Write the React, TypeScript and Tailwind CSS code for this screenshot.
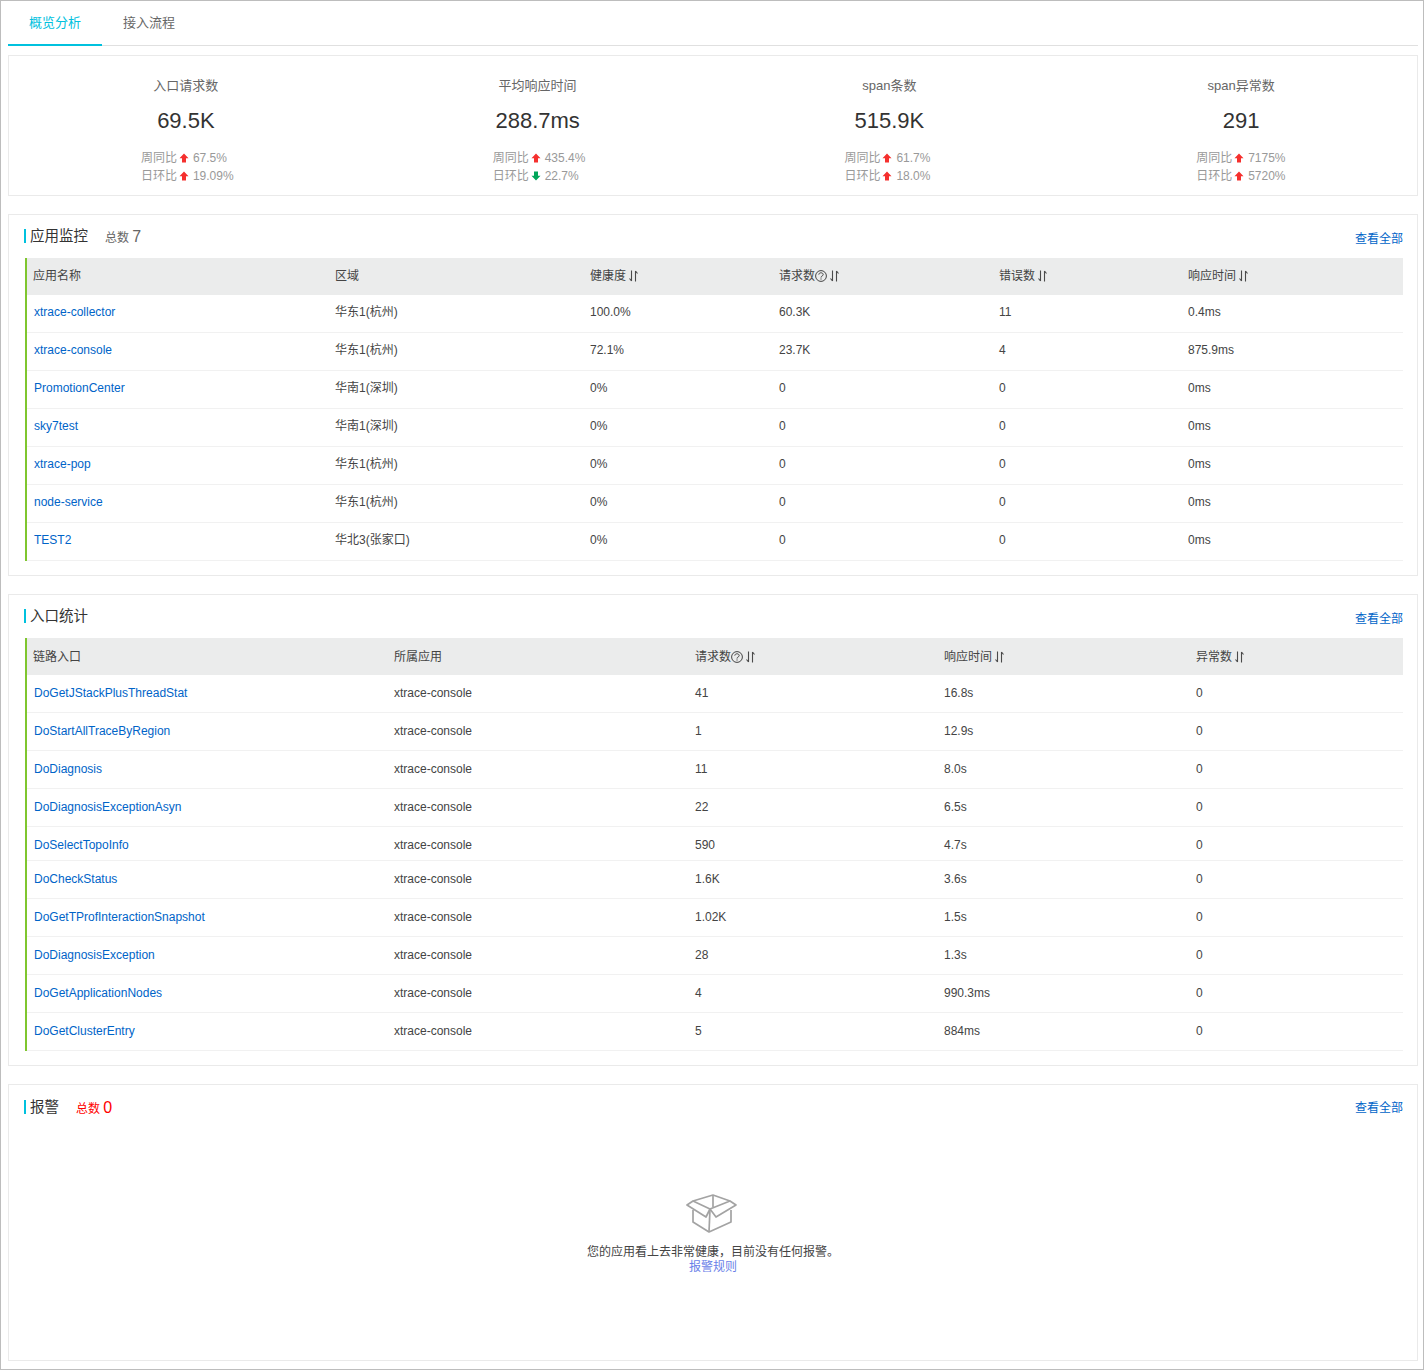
const up = (c: string) => (
  <svg width="10" height="10" viewBox="0 0 10 10" className="inline-block align-[-1px] ml-[2px] mr-[4px]">
    <path d="M5 0.5L9.5 5.2H7V9.5H3V5.2H0.5Z" fill={c} />
  </svg>
);
const down = (c: string) => (
  <svg width="10" height="10" viewBox="0 0 10 10" className="inline-block align-[-1px] ml-[2px] mr-[4px]">
    <path d="M5 9.5L9.5 4.8H7V0.5H3V4.8H0.5Z" fill={c} />
  </svg>
);

function Sort() {
  return (
    <svg width="9" height="12" viewBox="0 0 9 12" className="inline-block align-[-2px] ml-[3px]" fill="none" stroke="#4a4a4a" strokeWidth="1.1">
      <path d="M2.5 0.5V11M0.5 8.5L2.5 11" />
      <path d="M6.5 11.5V1M8.5 3.5L6.5 1" />
    </svg>
  );
}

function Help() {
  return (
    <svg width="12" height="12" viewBox="0 0 12 12" className="inline-block align-[-2px]" fill="none" stroke="#444" strokeWidth="1">
      <circle cx="6" cy="6" r="5.4" />
      <path d="M3.8 4.6C3.8 2.2 8.2 2.2 8.2 4.6C8.2 6 6 5.8 6 7.6" />
      <path d="M6 8.4V9.6" />
    </svg>
  );
}

function Stat({ title, value, wk, wkUp, day, dayUp }: { title: string; value: string; wk: string; wkUp: boolean; day: string; dayUp: boolean }) {
  return (
    <div className="w-[352px] flex flex-col items-center">
      <div className="text-[13px] leading-[18px] text-[#666] mt-[21px]">{title}</div>
      <div className="text-[22px] leading-[30px] text-[#333] mt-[11px]">{value}</div>
      <div className="mt-[13px] w-[90px] text-[12px] leading-[18px] text-[#999] whitespace-nowrap">
        <div>周同比{wkUp ? up("#f5302e") : down("#00a65a")}{wk}</div>
        <div>日环比{dayUp ? up("#f5302e") : down("#00a65a")}{day}</div>
      </div>
    </div>
  );
}

function Title({ name, extra, danger }: { name: string; extra?: string; danger?: boolean }) {
  return (
    <div className="h-[43px] flex items-start justify-between pr-[14px] pl-[15px]">
      <div className={`flex items-center h-[14px] ${danger ? "mt-[15px]" : "mt-[14px]"}`}>
        <div className="w-[2px] h-[14px] bg-[#00c1de]" />
        <span className="ml-[4px] mt-[2px] text-[14.5px] text-[#333]">{name}</span>
        {extra !== undefined && (
          <span className={`ml-[17px] text-[12px] mt-[2px] ${danger ? "text-[#ff0000]" : "text-[#666]"}`}>
            总数 <span className="text-[16px]">{extra}</span>
          </span>
        )}
      </div>
      <a className={`text-[12px] text-[#0064c8] leading-[16px] ${danger ? "mt-[15px]" : "mt-[16px]"}`}>查看全部</a>
    </div>
  );
}

type Col = { t: string; help?: boolean; sort?: boolean };

function Table({ cols, rows, gridClass, shortRow, headPad, cellPad }: { cols: Col[]; rows: string[][]; gridClass: string; shortRow?: number; headPad: string; cellPad: string }) {
  return (
    <div className="ml-[16px] mr-[14px] border-l-2 border-[#7fc62f]">
      <div className={`grid ${gridClass} h-[37px] items-center bg-[#ebecec] text-[12px] text-[#444] ${headPad}`}>
        {cols.map((c, j) => (
          <div key={c.t} className={`whitespace-nowrap ${j === 0 ? "pl-[6px]" : "pl-[5px]"}`}>
            {c.t}
            {c.help && <Help />}
            {c.sort && <Sort />}
          </div>
        ))}
      </div>
      {rows.map((r, i) => (
        <div
          key={r[0]}
          className={`grid ${gridClass} ${i === shortRow ? "h-[34px]" : "h-[38px]"} items-start border-b border-[#f1f1f1] text-[12px] leading-[14px] text-[#444] ${cellPad}`}
        >
          {r.map((v, j) => (
            <div key={j} className={`whitespace-nowrap ${j === 0 ? "pl-[7px] text-[#0064c8]" : "pl-[5px]"}`}>
              {v}
            </div>
          ))}
        </div>
      ))}
    </div>
  );
}

const apps = [
  ["xtrace-collector", "华东1(杭州)", "100.0%", "60.3K", "11", "0.4ms"],
  ["xtrace-console", "华东1(杭州)", "72.1%", "23.7K", "4", "875.9ms"],
  ["PromotionCenter", "华南1(深圳)", "0%", "0", "0", "0ms"],
  ["sky7test", "华南1(深圳)", "0%", "0", "0", "0ms"],
  ["xtrace-pop", "华东1(杭州)", "0%", "0", "0", "0ms"],
  ["node-service", "华东1(杭州)", "0%", "0", "0", "0ms"],
  ["TEST2", "华北3(张家口)", "0%", "0", "0", "0ms"],
];

const entries = [
  ["DoGetJStackPlusThreadStat", "41", "16.8s"],
  ["DoStartAllTraceByRegion", "1", "12.9s"],
  ["DoDiagnosis", "11", "8.0s"],
  ["DoDiagnosisExceptionAsyn", "22", "6.5s"],
  ["DoSelectTopoInfo", "590", "4.7s"],
  ["DoCheckStatus", "1.6K", "3.6s"],
  ["DoGetTProfInteractionSnapshot", "1.02K", "1.5s"],
  ["DoDiagnosisException", "28", "1.3s"],
  ["DoGetApplicationNodes", "4", "990.3ms"],
  ["DoGetClusterEntry", "5", "884ms"],
].map(([a, b, c]) => [a, "xtrace-console", b, c, "0"]);

export default function App() {
  return (
    <div
      className="w-[1424px] h-[1370px] border border-[#bdbdbd] bg-white pl-[7px] pr-[5px] overflow-hidden"
      style={{ fontFamily: '"Liberation Sans", "Noto Sans CJK SC", sans-serif' }}
    >
      <div className="flex h-[45px] border-b border-[#e0e0e0] text-[13px]">
        <div className="w-[94px] h-[45px] flex items-start justify-center pt-[12px] text-[#00c1de] border-b-2 border-[#00c1de]">概览分析</div>
        <div className="w-[94px] flex items-start justify-center pt-[12px] text-[#666]">接入流程</div>
      </div>

      <div className="mt-[9px] h-[141px] border border-[#eaeaea] flex pl-[1px]">
        <Stat title="入口请求数" value="69.5K" wk="67.5%" wkUp day="19.09%" dayUp />
        <Stat title="平均响应时间" value="288.7ms" wk="435.4%" wkUp day="22.7%" dayUp={false} />
        <Stat title="span条数" value="515.9K" wk="61.7%" wkUp day="18.0%" dayUp />
        <Stat title="span异常数" value="291" wk="7175%" wkUp day="5720%" dayUp />
      </div>

      <div className="mt-[18px] h-[362px] border border-[#eaeaea]">
        <Title name="应用监控" extra="7" />
        <Table
          gridClass="grid-cols-[303px_255px_189px_220px_189px_1fr]"
          headPad="pb-[1px]"
          cellPad="pt-[10px]"
          cols={[
            { t: "应用名称" },
            { t: "区域" },
            { t: "健康度", sort: true },
            { t: "请求数", help: true, sort: true },
            { t: "错误数", sort: true },
            { t: "响应时间", sort: true },
          ]}
          rows={apps}
        />
      </div>

      <div className="mt-[18px] h-[472px] border border-[#eaeaea]">
        <Title name="入口统计" />
        <Table
          gridClass="grid-cols-[362px_301px_249px_252px_1fr]"
          headPad=""
          cellPad="pt-[11px]"
          cols={[
            { t: "链路入口" },
            { t: "所属应用" },
            { t: "请求数", help: true, sort: true },
            { t: "响应时间", sort: true },
            { t: "异常数", sort: true },
          ]}
          rows={entries}
          shortRow={4}
        />
      </div>

      <div className="mt-[18px] h-[277px] border border-[#eaeaea]">
        <Title name="报警" extra="0" danger />
        <div className="flex flex-col items-center mt-[66px]">
          <svg width="52" height="40" viewBox="0 0 52 40" fill="none" stroke="#a3a3a3" strokeWidth="1.7" strokeLinejoin="round" className="-ml-[2px]">
            <path d="M7 7L27 1L44 7L24 15Z" />
            <path d="M7 7L1 11L20 23L24 15L30 23L50 11L44 7" />
            <path d="M7 16V28L23 38L45 28V16" />
            <path d="M24 15L23 38" />
            <path d="M27 1V13" />
          </svg>
          <div className="text-[12px] leading-[15px] text-[#444] mt-[11px]">您的应用看上去非常健康，目前没有任何报警。</div>
          <a className="text-[12px] leading-[15px] text-[#6a7fe8]">报警规则</a>
        </div>
      </div>
    </div>
  );
}
